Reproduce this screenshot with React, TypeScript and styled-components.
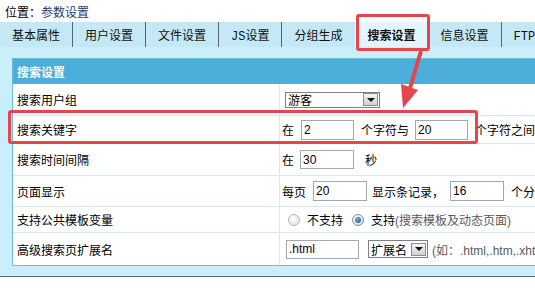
import styled, { createGlobalStyle } from 'styled-components';

const GlobalStyle = createGlobalStyle`
  html, body {
    margin: 0;
    padding: 0;
    background: #fff;
  }

  body {
    font-family: "Liberation Sans", "Noto Sans CJK SC", sans-serif;
    font-size: 12px;
    color: #111;
  }
`;

const Page = styled.div`
  position: relative;
  width: 535px;
  height: 299px;
  overflow: hidden;
`;

const Location = styled.div`
  box-sizing: border-box;
  height: 22px;
  padding: 4px 0 0 5px;
  line-height: 18px;
  color: #000;

  span {
    color: #1d3a6a;
  }
`;

const TabBar = styled.div`
  display: flex;
  height: 25px;
  background: #c4e8f5;
  white-space: nowrap;
`;

const Tab = styled.div<{ $active?: boolean; $sep?: boolean }>`
  display: flex;
  align-items: center;
  padding: 0 12px;
  font-family: "Liberation Mono", "Noto Sans CJK SC", monospace;
  font-size: 12px;
  color: #111;
  border-right: 1px solid ${(p) => (p.$sep ? '#5d6366' : 'transparent')};
  background: ${(p) => (p.$active ? '#e3f6fd' : 'transparent')};
  font-weight: ${(p) => (p.$active ? 'bold' : 'normal')};
`;

const Content = styled.div`
  background: #c9effb;
  padding: 11px 0 10px 12px;
  border-bottom: 1px solid #676b6e;
  overflow: hidden;
`;

const Panel = styled.div`
  width: 580px;
  border: 1px solid #6dbcd9;
  background: #fff;
`;

const PanelHeader = styled.div`
  display: flex;
  align-items: center;
  height: 25px;
  padding-left: 4px;
  background: #4caedb;
  color: #fff;
  font-weight: bold;
`;

const Row = styled.div<{ $h: number; $last?: boolean }>`
  box-sizing: border-box;
  display: flex;
  height: ${(p) => p.$h}px;
  border-bottom: ${(p) => (p.$last ? 'none' : '1px solid #d6e9f1')};
`;

const Label = styled.div`
  box-sizing: border-box;
  display: flex;
  align-items: center;
  width: 266px;
  padding-left: 4px;
  color: #000;
`;

const Value = styled.div`
  display: flex;
  flex: 1;
  align-items: center;
  padding-left: 2px;
  border-left: 1px solid #d6e9f1;
  white-space: nowrap;
  color: #000;
`;

const Txt = styled.span<{ $ml?: number; $muted?: boolean }>`
  margin-left: ${(p) => p.$ml ?? 0}px;
  color: ${(p) => (p.$muted ? '#5a5a5a' : '#000')};
`;

const Field = styled.input<{ $w: number; $h?: number; $ml?: number }>`
  box-sizing: border-box;
  width: ${(p) => p.$w}px;
  height: ${(p) => p.$h ?? 20}px;
  margin: 0 0 0 ${(p) => p.$ml ?? 0}px;
  padding: 0 2px;
  border: 1px solid #a3a8ad;
  background: #fff;
  font-family: "Liberation Sans", "Noto Sans CJK SC", sans-serif;
  font-size: 12px;
  color: #000;
  outline: none;
`;

const Select = styled.div<{ $w: number; $h: number; $ml?: number }>`
  box-sizing: border-box;
  display: flex;
  align-items: center;
  justify-content: space-between;
  width: ${(p) => p.$w}px;
  height: ${(p) => p.$h}px;
  margin-left: ${(p) => p.$ml ?? 0}px;
  padding: 0 1px 0 2px;
  border: 1px solid #7d8185;
  background: #fff;
  color: #000;
`;

const DropButton = styled.span`
  box-sizing: border-box;
  display: flex;
  align-items: center;
  justify-content: center;
  width: 15px;
  height: 13px;
  border: 1px solid #8a8e92;
  background: linear-gradient(#f4f4f4, #cfd1d3);

  &::after {
    content: '';
    border-left: 4px solid transparent;
    border-right: 4px solid transparent;
    border-top: 4px solid #111;
  }
`;

const Radio = styled.span<{ $checked?: boolean; $ml?: number }>`
  box-sizing: border-box;
  display: inline-flex;
  align-items: center;
  justify-content: center;
  width: 12px;
  height: 12px;
  margin-left: ${(p) => p.$ml ?? 0}px;
  border-radius: 50%;
  border: 1px solid ${(p) => (p.$checked ? '#7a8ea3' : '#b4b8bc')};
  background: radial-gradient(circle at 40% 35%, #ffffff, #d9dcdf);

  &::after {
    content: '';
    display: ${(p) => (p.$checked ? 'block' : 'none')};
    width: 6px;
    height: 6px;
    border-radius: 50%;
    background: radial-gradient(circle at 35% 35%, #6fb0e6, #174f8c);
  }
`;

const RedBox = styled.div<{ $x: number; $y: number; $w: number; $h: number }>`
  position: absolute;
  box-sizing: border-box;
  left: ${(p) => p.$x}px;
  top: ${(p) => p.$y}px;
  width: ${(p) => p.$w}px;
  height: ${(p) => p.$h}px;
  border: 3px solid #e4464b;
  border-radius: 3px;
  pointer-events: none;
`;

const Overlay = styled.svg`
  position: absolute;
  left: 0;
  top: 0;
  pointer-events: none;
`;

function App() {
  return (
    <Page>
      <GlobalStyle />
      <Location>
        位置：<span>参数设置</span>
      </Location>

      <TabBar>
        <Tab $sep>基本属性</Tab>
        <Tab $sep>用户设置</Tab>
        <Tab $sep>文件设置</Tab>
        <Tab $sep>JS设置</Tab>
        <Tab>分组生成</Tab>
        <Tab $active>搜索设置</Tab>
        <Tab $sep>信息设置</Tab>
        <Tab>FTP/远程设置</Tab>
      </TabBar>

      <Content>
        <Panel>
          <PanelHeader>搜索设置</PanelHeader>

          <Row $h={32}>
            <Label>搜索用户组</Label>
            <Value>
              <Select $w={95} $h={16} $ml={3}>
                游客
                <DropButton />
              </Select>
            </Value>
          </Row>

          <Row $h={28}>
            <Label>搜索关键字</Label>
            <Value>
              <Txt>在</Txt>
              <Field $w={53} $ml={7} defaultValue="2" />
              <Txt $ml={7}>个字符与</Txt>
              <Field $w={53} $ml={6} defaultValue="20" />
              <Txt $ml={7}>个字符之间</Txt>
            </Value>
          </Row>

          <Row $h={32}>
            <Label>搜索时间间隔</Label>
            <Value>
              <Txt>在</Txt>
              <Field $w={54} $h={19} $ml={6} defaultValue="30" />
              <Txt $ml={11}>秒</Txt>
            </Value>
          </Row>

          <Row $h={31}>
            <Label>页面显示</Label>
            <Value>
              <Txt>每页</Txt>
              <Field $w={54} $ml={7} defaultValue="20" />
              <Txt $ml={5}>显示条记录，</Txt>
              <Field $w={54} $ml={6} defaultValue="16" />
              <Txt $ml={7}>个分页链接</Txt>
            </Value>
          </Row>

          <Row $h={26}>
            <Label>支持公共模板变量</Label>
            <Value>
              <Radio $ml={6} />
              <Txt $ml={7}>不支持</Txt>
              <Radio $checked $ml={9} />
              <Txt $ml={7}>支持</Txt>
              <Txt $muted>(搜索模板及动态页面)</Txt>
            </Value>
          </Row>

          <Row $h={32} $last>
            <Label>高级搜索页扩展名</Label>
            <Value>
              <Field $w={73} $h={19} $ml={4} defaultValue=".html" />
              <Select $w={60} $h={18} $ml={9}>
                扩展名
                <DropButton />
              </Select>
              <Txt $ml={4} $muted>(如：.html,.htm,.xhtml)</Txt>
            </Value>
          </Row>
        </Panel>
      </Content>

      <RedBox $x={356} $y={14} $w={74} $h={37} />
      <RedBox $x={8} $y={110} $w={470} $h={34} />
      <Overlay width="535" height="299" viewBox="0 0 535 299">
        <line x1="421" y1="51" x2="410" y2="88" stroke="#e4464b" strokeWidth="4" />
        <polygon points="403,108 418,90 401,84" fill="#e4464b" />
      </Overlay>
    </Page>
  );
}

export default App;
